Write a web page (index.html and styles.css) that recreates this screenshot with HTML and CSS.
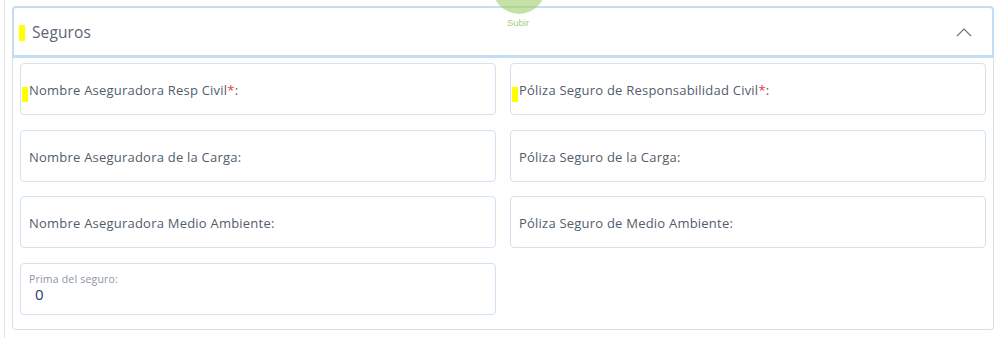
FILE: index.html
```html
<!DOCTYPE html>
<html lang="es">
<head>
    <meta charset="UTF-8">
    <meta name="viewport" content="width=device-width, initial-scale=1.0">
    <title>Seguros</title>
    <link rel="stylesheet" href="styles.css">
</head>
<body>
    <div class="page">
        <a class="subir" href="#">
            <span class="subir-dot"></span>
            <span class="subir-text">Subir</span>
        </a>
        <div class="panel">
            <div class="panel-head">
                <span class="mark mark-head"></span>
                <span class="panel-title">Seguros</span>
                <svg class="chevron" width="16" height="10" viewBox="0 0 16 10">
                    <path d="M1 9 L8 2 L15 9" fill="none" stroke="#6b7482" stroke-width="1.2"/>
                </svg>
            </div>
            <div class="panel-body">
                <div class="field">
                    <span class="mark"></span>
                    <label>Nombre Aseguradora Resp Civil<span class="req">*</span>:</label>
                </div>
                <div class="field">
                    <span class="mark"></span>
                    <label>Póliza Seguro de Responsabilidad Civil<span class="req">*</span>:</label>
                </div>
                <div class="field">
                    <label>Nombre Aseguradora de la Carga:</label>
                </div>
                <div class="field">
                    <label>Póliza Seguro de la Carga:</label>
                </div>
                <div class="field">
                    <label>Nombre Aseguradora Medio Ambiente:</label>
                </div>
                <div class="field">
                    <label>Póliza Seguro de Medio Ambiente:</label>
                </div>
                <div class="field field-input">
                    <span class="small-label">Prima del seguro:</span>
                    <span class="value">0</span>
                </div>
            </div>
        </div>
    </div>
</body>
</html>
```

FILE: styles.css
```css
body {
    margin: 0;
    padding: 0;
    background: #fff;
    font-family: "Open Sans", sans-serif;
    color: #566172;
}
.page {
    position: relative;
    margin-left: 4px;
    min-height: 338px;
    border-left: 1px solid #e1e1e1;
    padding: 6px 10px 0 7px;
}
.subir {
    position: absolute;
    top: 0;
    left: 485px;
    width: 56px;
    text-decoration: none;
    text-align: center;
    z-index: 2;
}
.subir-dot {
    position: absolute;
    top: -42px;
    left: 2px;
    width: 54px;
    height: 56px;
    border-radius: 50%;
    background: rgba(158, 207, 104, 0.6);
}
.subir-text {
    position: relative;
    display: block;
    padding-top: 17px;
    font-family: "Liberation Sans", Arial, sans-serif;
    font-size: 9.5px;
    color: #9fd07c;
}
.panel {
    width: 982px;
}
.panel-head {
    position: relative;
    display: flex;
    align-items: center;
    height: 47px;
    border: 2px solid #c2ddf4;
    border-bottom-width: 3px;
    border-radius: 4px 4px 0 0;
    padding-left: 18px;
}
.panel-title {
    font-size: 15.5px;
    color: #5b6576;
    letter-spacing: 0.1px;
}
.chevron {
    margin-left: auto;
    margin-right: 20px;
}
.mark {
    position: absolute;
    left: 1px;
    top: 23px;
    width: 6px;
    height: 15px;
    background: #ffff00;
}
.mark-head {
    left: 5px;
    top: 17px;
    height: 16px;
}
.panel-body {
    display: grid;
    grid-template-columns: 476px 476px;
    column-gap: 14px;
    row-gap: 14.7px;
    border: 1px solid #dedede;
    border-top: none;
    border-radius: 0 0 4px 4px;
    padding: 5px 7px 14px 7px;
}
.field {
    position: relative;
    box-sizing: border-box;
    height: 52px;
    border: 1px solid #d3e2f0;
    border-radius: 4px;
    padding: 14px 8px 0 8px;
}
.field label {
    font-size: 13px;
    font-weight: 500;
    color: #525d6d;
    letter-spacing: 0.22px;
}
.req {
    color: #e8383b;
}
.field-input {
    padding-top: 8px;
}
.small-label {
    display: block;
    font-size: 10.5px;
    color: #8d96a4;
    letter-spacing: 0.2px;
}
.value {
    display: block;
    padding-left: 6px;
    font-size: 15px;
    line-height: 17px;
    color: #213c66;
}
```
